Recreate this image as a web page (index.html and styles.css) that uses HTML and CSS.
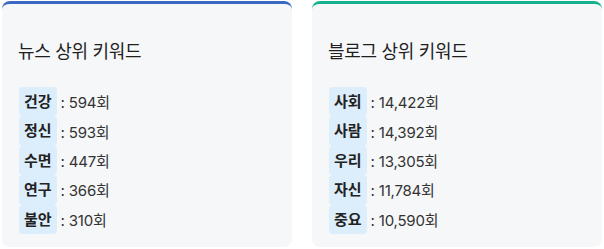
FILE: index.html
```html
<!DOCTYPE html>
<html lang="ko">
<head>
<meta charset="utf-8">
<link rel="stylesheet" href="styles.css">
</head>
<body>
<div class="grid">
  <section class="card card-news">
    <h3 class="title">뉴스 상위 키워드</h3>
    <ul class="list">
      <li class="row"><span class="chip">건강</span><span class="count">: 594회</span></li>
      <li class="row"><span class="chip">정신</span><span class="count">: 593회</span></li>
      <li class="row"><span class="chip">수면</span><span class="count">: 447회</span></li>
      <li class="row"><span class="chip">연구</span><span class="count">: 366회</span></li>
      <li class="row"><span class="chip">불안</span><span class="count">: 310회</span></li>
    </ul>
  </section>
  <section class="card card-blog">
    <h3 class="title">블로그 상위 키워드</h3>
    <ul class="list">
      <li class="row"><span class="chip">사회</span><span class="count">: 14,422회</span></li>
      <li class="row"><span class="chip">사람</span><span class="count">: 14,392회</span></li>
      <li class="row"><span class="chip">우리</span><span class="count">: 13,305회</span></li>
      <li class="row"><span class="chip">자신</span><span class="count">: 11,784회</span></li>
      <li class="row"><span class="chip">중요</span><span class="count">: 10,590회</span></li>
    </ul>
  </section>
</div>
</body>
</html>
```

FILE: styles.css
```css
* { box-sizing: border-box; }
html, body { margin: 0; padding: 0; background: #ffffff; }
body {
  font-family: Inter, "Noto Sans CJK KR", "Noto Sans", sans-serif;
  color: #222;
}
.grid {
  display: grid;
  grid-template-columns: 290px 290px;
  column-gap: 20px;
  padding: 1px 2px 0;
}
.card {
  background: #f6f7f9;
  border-radius: 8px;
  border-top: 3px solid #3a68c2;
  padding: 16px 16px 13px 16px;
}
.card-blog { border-top-color: #13b18c; }
.title {
  margin: 19px 0 0 0;
  font-size: 18px;
  line-height: 26px;
  font-weight: 400;
  color: #1f1f1f;
  letter-spacing: -0.3px;
}
.list {
  list-style: none;
  margin: 22px 0 0 0;
  padding: 0;
}
.row {
  display: flex;
  align-items: center;
  height: 29.4px;
}
.chip {
  display: inline-block;
  background: #dcedfb;
  border-radius: 4px;
  padding: 4px 5px 4px 5px;
  margin-left: 1px;
  font-size: 15px;
  line-height: 21.4px;
  font-weight: 700;
  color: #222;
}
.count {
  margin-left: 4px;
  font-size: 15px;
  color: #333;
  letter-spacing: -0.2px;
}
```
